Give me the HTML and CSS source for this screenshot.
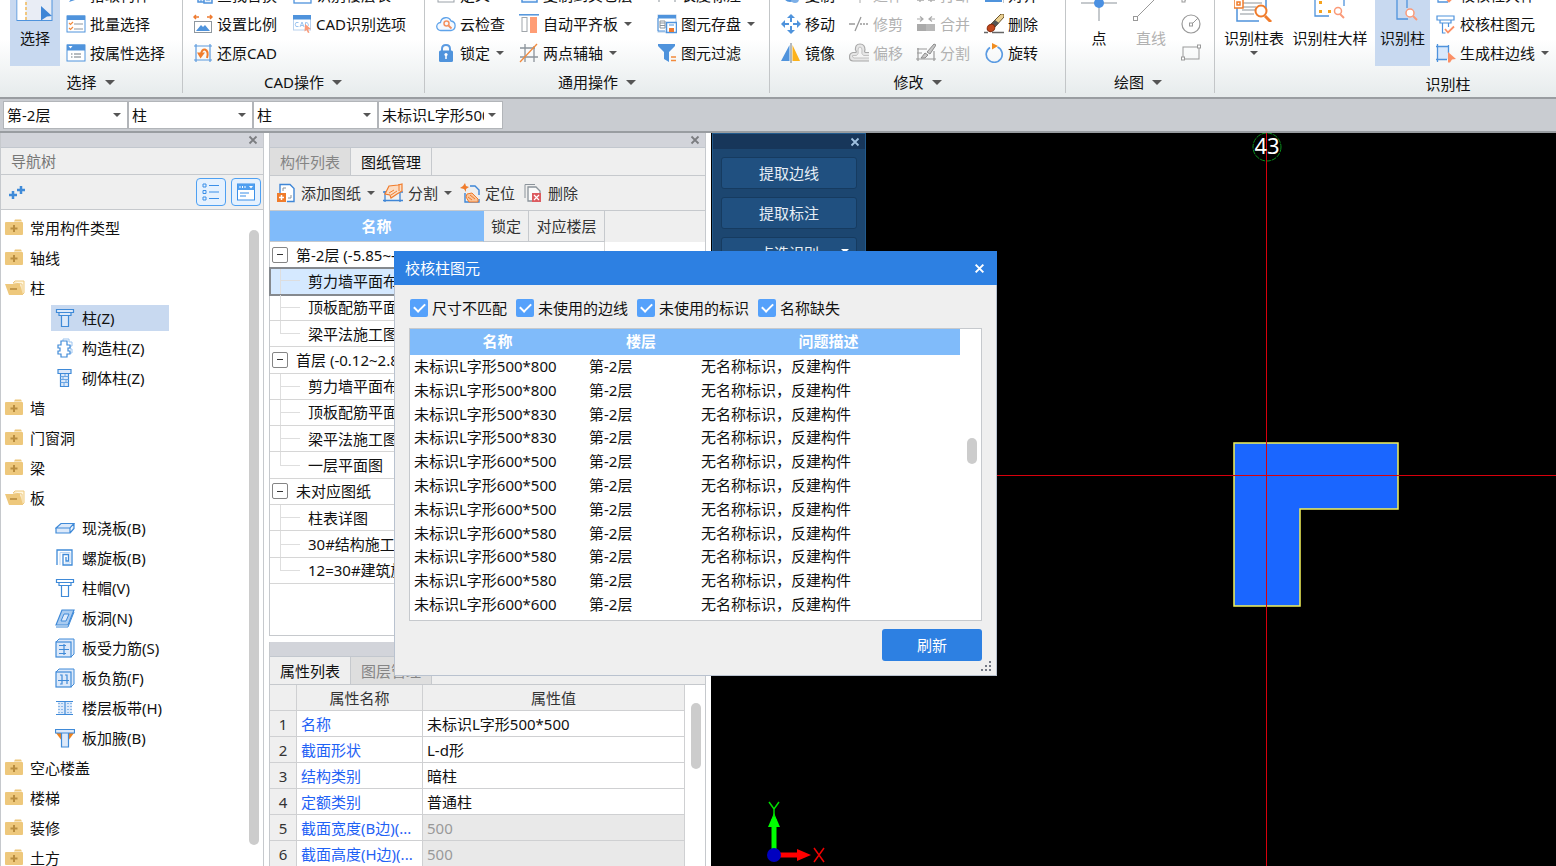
FILE: index.html
```html
<!DOCTYPE html>
<html lang="zh-CN">
<head>
<meta charset="utf-8">
<title>校核柱图元</title>
<link rel="stylesheet" href="styles.css">
</head>
<body>
<svg class="sprite" aria-hidden="true">
  <defs>
    <symbol id="i-batch" viewBox="0 0 20 20"><rect x="1" y="2" width="18" height="16" fill="#fff" stroke="#4f93dc"/><rect x="1" y="1.500" width="18" height="4.500" fill="#4f93dc"/><path d="M3 9l1.500 1.500L7 8M3 14l1.500 1.500L7 13" fill="none" stroke="#f28a3c" stroke-width="1.200"/><path d="M8 10h9M8 15h9" stroke="#8d959d" stroke-width="1.200"/></symbol>
    <symbol id="i-prop" viewBox="0 0 20 20"><rect x="1" y="2" width="18" height="16" fill="#fff" stroke="#4f93dc"/><rect x="1" y="1.500" width="18" height="6" fill="#4f93dc"/><path d="M2.500 3h4l-2 2.500z" fill="#fff"/><path d="M5 11h1.500M8 11h7M5 14h1.500M8 14h7" stroke="#6f7880" stroke-width="1.200"/></symbol>
    <symbol id="i-pick" viewBox="0 0 20 20"><path d="M3 17l5-7 4 4z" fill="#4f93dc"/><path d="M10 10l6-6" stroke="#4f93dc" stroke-width="2"/></symbol>
    <symbol id="i-find" viewBox="0 0 20 20"><rect x="5" y="3" width="10" height="14" fill="#e6f0fc" stroke="#4f93dc" stroke-width="1.500"/><rect x="11" y="10" width="8" height="8" fill="#e6f0fc" stroke="#4f93dc" stroke-width="1.500"/><path d="M8 12v5M13 15h4" stroke="#4f93dc"/></symbol>
    <symbol id="i-scale" viewBox="0 0 20 20"><path d="M1 3h5M14 3h5M3 1L1 3l2 2M17 1l2 2-2 2" fill="none" stroke="#ee7b30" stroke-width="1.500"/><rect x="1.500" y="7.500" width="17" height="11" fill="#fff" stroke="#8e979f"/><path d="M3 17l5-6 2 2 2-2 5 6z" fill="#4f93dc"/></symbol>
    <symbol id="i-restore" viewBox="0 0 20 20"><path d="M3 1v18M17 1v18M1 3h18M1 17h18" stroke="#5b9ade" stroke-width="1.200"/><path d="M8 11Q9 6 12 6.500 16 8 14 15" fill="none" stroke="#f07c2c" stroke-width="2"/><path d="M4 9.500h8l-4.500 6z" fill="#f07c2c"/></symbol>
    <symbol id="i-floor" viewBox="0 0 20 20"><rect x="2" y="2" width="17" height="16" fill="#fff" stroke="#4f93dc" stroke-width="1.300"/><path d="M6 11h9M6 14h9" stroke="#4f93dc"/></symbol>
    <symbol id="i-cadopt" viewBox="0 0 20 20"><rect x="1.500" y="2" width="17" height="14" fill="#fff" stroke="#b9d2ee"/><rect x="1" y="1" width="18" height="4.500" fill="#4f93dc"/><path d="M6.500 8.500H4q-1.500 2 0 4h2.500M8 13l2-5 2 5M9 11.500h2M13.500 8.500v4.500q4-.5 2.500-3.500-.5-1-2.500-1z" fill="none" stroke="#9cc4ef"/><path d="M13 10l6 5-3 .5 1.500 3-1.500.5-1.500-3-2 1.500z" fill="#fb9a78"/></symbol>
    <symbol id="i-define" viewBox="0 0 20 20"><rect x="2" y="2" width="16" height="15" fill="#fff" stroke="#9aa1a8"/><path d="M5 12h10" stroke="#9aa1a8"/></symbol>
    <symbol id="i-cloud" viewBox="0 0 20 20"><path d="M5 16.500a4 4 0 0 1-.5-8A5.500 5.500 0 0 1 15 7a4.800 4.800 0 0 1 0 9.500z" fill="#f4f9ff" stroke="#5fa3ea" stroke-width="1.300"/><circle cx="10.500" cy="9.500" r="2.500" fill="none" stroke="#f39160" stroke-width="1.500"/><path d="M12.500 11.500l3 3" stroke="#f39160" stroke-width="1.800"/></symbol>
    <symbol id="i-lock" viewBox="0 0 20 20"><path d="M6 8V6q0-4 4-4t4 4v2" fill="none" stroke="#5b9be2" stroke-width="2"/><rect x="3" y="7.500" width="14" height="11.500" rx="1.500" fill="#4f93dc"/><circle cx="10" cy="11.500" r="1.600" fill="#fff"/><path d="M10 12v4" stroke="#fff" stroke-width="1.500"/></symbol>
    <symbol id="i-copy" viewBox="0 0 20 20"><rect x="3" y="2" width="15" height="15" fill="#eaf3fe" stroke="#4f93dc" stroke-width="1.500"/></symbol>
    <symbol id="i-align" viewBox="0 0 20 20"><path d="M0 .8h20" stroke="#4f93dc" stroke-width="1.500"/><rect x="3" y="3.500" width="5" height="14" fill="#fff" stroke="#a0a6ab"/><rect x="11" y="3" width="7" height="16" fill="#ff9d75"/></symbol>
    <symbol id="i-axis" viewBox="0 0 20 20"><path d="M6 1v18M15 3v16M1 5h15M1 14h18" stroke="#8b939a" stroke-width="1.300"/><path d="M1 19L18 1" stroke="#f28a3c" stroke-width="1.300"/></symbol>
    <symbol id="i-dim" viewBox="0 0 20 20"><path d="M2 5v12M18 5v12M2 10h16" stroke="#8b939a"/></symbol>
    <symbol id="i-store" viewBox="0 0 20 20"><rect x="1" y="1" width="18" height="17" fill="#fff" stroke="#b0c9e6"/><rect x="1" y="1" width="18" height="3.500" fill="#4f93dc"/><path d="M1 4v13h7" fill="none" stroke="#4f93dc"/><path d="M3 7h5v7H3zM3 9h5M3 11.500h5" fill="none" stroke="#8b939a"/><rect x="9.500" y="8.500" width="10" height="10" fill="#fff" stroke="#4f93dc" stroke-width="1.500"/><rect x="12" y="14" width="5" height="4" fill="#ee7b30"/><path d="M12 11h5" stroke="#4f93dc"/></symbol>
    <symbol id="i-filter" viewBox="0 0 20 20"><path d="M1 1h17v2l-6 6v10l-5-3V9L1 3z" fill="#4f93dc"/><path d="M14 14h5M14 17.500h5" stroke="#f28a3c" stroke-width="1.500"/></symbol>
    <symbol id="i-move" viewBox="0 0 20 20"><path d="M10 0l4 4h-3v4H9V4H6zM10 20l-4-4h3v-4h2v4h3zM0 10l4-4v3h4v2H4v3zM20 10l-4 4v-3h-4V9h4V6z" fill="#4f93dc"/></symbol>
    <symbol id="i-mirror" viewBox="0 0 20 20"><path d="M8.500 2v16H0z" fill="#4f93dc"/><path d="M11.500 2v16H19z" fill="#fcb21c"/><path d="M10 0v20" stroke="#6f7880"/></symbol>
    <symbol id="i-dup" viewBox="0 0 20 20"><circle cx="9" cy="10" r="6" fill="none" stroke="#4f93dc" stroke-width="2"/><circle cx="14" cy="14" r="4" fill="#7db0e8"/></symbol>
    <symbol id="i-trim" viewBox="0 0 20 20"><path d="M0 10h6M6 17L12 3" stroke="#999" stroke-width="1.300"/><path d="M11 10h9" stroke="#999" stroke-width="1.300" stroke-dasharray="2 1"/></symbol>
    <symbol id="i-offset" viewBox="0 0 20 20"><path d="M20 18H4q-3.500 0-3.500-4T4 9.500h2.500Q8 9 6.500 7 6 1 11 1t5 6q-1 2 .5 2.500H20" fill="#e6e6e6" stroke="#a8a8a8" stroke-width="1.200"/><path d="M20 15H5q-2-.5-1.500-2.500h4Q10 11 9 7q0-3 2-3t2 3q-1 4 1.500 5.500H20" fill="#f4f4f4" stroke="#c2c2c2"/></symbol>
    <symbol id="i-extend" viewBox="0 0 20 20"><path d="M4 12h14M11 2v16" stroke="#aaa"/></symbol>
    <symbol id="i-merge" viewBox="0 0 20 20"><path d="M1 5h6M4 2.500L7 5 4 7.500M19 5h-6M16 2.500L13 5l3 2.500" fill="none" stroke="#aaa" stroke-width="1.200"/><rect x="1" y="10" width="9" height="7" fill="#aaa"/><rect x="10" y="10" width="9" height="7" fill="#b8b8b8"/></symbol>
    <symbol id="i-split" viewBox="0 0 20 20"><path d="M1 6h10M2 5v13M0 16h20M18 8v10M1 10h5" fill="none" stroke="#999" stroke-width="1.200"/><path d="M5 15l4-5 3 2-3 3zM11 9l7-8 2 1-6 9z" fill="#c8c8c8" stroke="#8b8b8b"/></symbol>
    <symbol id="i-break" viewBox="0 0 20 20"><path d="M1 15h7M12 15h7M4 11v6M15 11v6" stroke="#aaa" stroke-width="1.300"/></symbol>
    <symbol id="i-flush" viewBox="0 0 20 20"><rect x="1" y="8" width="17" height="9" fill="#4f93dc"/><path d="M20 2v16" stroke="#8b939a"/></symbol>
    <symbol id="i-erase" viewBox="0 0 20 20"><path d="M17 0h3v3l-9 10-4-3z" fill="#e9cf91" stroke="#6b542b"/><path d="M11 6l4 3-4 4-4-3z" fill="#555"/><ellipse cx="7" cy="14" rx="4" ry="3.500" transform="rotate(-35 7 14)" fill="#c2481c" stroke="#822a0c"/><path d="M0 18.500h4M8 18.500h12" stroke="#666" stroke-width="1.300"/></symbol>
    <symbol id="i-rotate" viewBox="0 0 20 20"><path d="M13.500 4A8 8 0 1 1 6 4.500" fill="none" stroke="#5b9be2" stroke-width="1.700"/><path d="M8 0l6 3-6 3.500z" fill="#f18d1f"/></symbol>
    <symbol id="i-colcheck" viewBox="0 0 20 20"><path d="M1 2h17v4H1zM4 6h11v3H4zM6.500 9v10h3M12.500 9v4" fill="#fff" stroke="#4f93dc" stroke-width="1.200"/><path d="M9 15l3 3.500 6-6" fill="none" stroke="#fb9066" stroke-width="1.800"/></symbol>
    <symbol id="i-coledge" viewBox="0 0 20 20"><rect x="2" y="3" width="10" height="13" fill="#d9e8fb"/><path d="M1.500 1v18M0 3.500h13M12.500 2v8M0 16.500h11" stroke="#4f93dc" stroke-width="1.300"/><path d="M12 9l8 7-4 .5-2 3h-2z" fill="#fb9066"/></symbol>
    <symbol id="i-coldet" viewBox="0 0 20 20"><path d="M2 2v15h10" fill="none" stroke="#4f93dc" stroke-width="1.300"/><rect x="5" y="11" width="3" height="3" fill="#f6a21c"/><path d="M10 13l3 3.500 6-6" fill="none" stroke="#fb9066" stroke-width="1.800"/></symbol>
    <symbol id="i-arc" viewBox="0 0 20 20"><path d="M4 16Q4 4 18 4" fill="none" stroke="#999"/><rect x="1" y="14" width="3" height="3" fill="#fff" stroke="#999"/></symbol>
    <symbol id="i-circle" viewBox="0 0 20 20"><circle cx="10" cy="10" r="9" fill="none" stroke="#999" stroke-width="1.200"/><rect x="8.500" y="9" width="3" height="3" fill="#fff" stroke="#999"/><path d="M12 9l5-5" stroke="#999"/></symbol>
    <symbol id="i-rect" viewBox="0 0 20 20"><rect x="2" y="4" width="16" height="12" fill="none" stroke="#999"/><rect x=".5" y="14" width="3" height="3" fill="#fff" stroke="#999"/><rect x="16.500" y="2" width="3" height="3" fill="#fff" stroke="#999"/></symbol>

    <symbol id="b-select" viewBox="0 0 40 40"><rect x="2" y="4" width="35" height="34.500" fill="#e9edf5" stroke="#4f93dc"/><rect x="2.500" y="5" width="8" height="33" fill="#fff"/><path d="M11 5v33" stroke="#f3b13f" stroke-dasharray="3 2" stroke-width="1.300"/><path d="M26 24l11 10-5 .5-6 4z" fill="#3f86d6"/></symbol>
    <symbol id="b-point" viewBox="0 0 40 40"><path d="M2 21h36M20 3v36" stroke="#8b939a"/><circle cx="20" cy="21" r="5" fill="#4a90e2"/></symbol>
    <symbol id="b-line" viewBox="0 0 40 40"><path d="M6 35L36 5" stroke="#999"/><rect x="2.500" y="34.500" width="4" height="4" fill="#fff" stroke="#999"/></symbol>
    <symbol id="b-table" viewBox="0 0 40 40"><path d="M3 4h29v26M3 25v14h22" fill="none" stroke="#4f93dc" stroke-width="1.500"/><path d="M5 21h23M8 25h14M8 28h14M6 32h14" stroke="#8b939a" stroke-width="1.200"/><path d="M0 17h9v9H0zM3 20h3v3H3z" fill="#fff" stroke="#f07c2c" stroke-width="1.500"/><circle cx="27" cy="29" r="5.500" fill="#fff" stroke="#f07c2c" stroke-width="2"/><path d="M31 34l6 6" stroke="#f07c2c" stroke-width="3"/></symbol>
    <symbol id="b-detail" viewBox="0 0 40 40"><path d="M5 4h29v20M5 4v30h14" fill="none" stroke="#4f93dc" stroke-width="1.300"/><path d="M9 19h3v3H9zM9 28h3v3H9zM18 28h3v3h-3z" fill="#f6a21c"/><circle cx="28" cy="29" r="3.500" fill="#fff" stroke="#fb9a78" stroke-width="1.500"/><path d="M30 32l4 4" stroke="#fb9a78" stroke-width="2"/></symbol>
    <symbol id="b-column" viewBox="0 0 40 40"><path d="M14 4v33h11M24 4v22" fill="none" stroke="#4f93dc" stroke-width="1.300"/><circle cx="27" cy="31" r="4" fill="#fff" stroke="#fb9a78" stroke-width="1.500"/><path d="M30 34l4 4" stroke="#fb9a78" stroke-width="2"/></symbol>

    <symbol id="t-closed" viewBox="0 0 20 20"><path d="M9 3.500l1-2h6l1 2z" fill="#eec87c"/><rect x="0" y="4" width="18" height="13" rx="1" fill="#eec87c"/><path d="M9 7v7M5.500 10.500h7" stroke="#b98d3f" stroke-width="2"/></symbol>
    <symbol id="t-open" viewBox="0 0 20 20"><path d="M8 5l2-2h9v12l-2 2V6z" fill="#fff6df" stroke="#eec87c"/><path d="M0 6h15l3 11H4z" fill="#eec87c"/><path d="M5 11h7" stroke="#b5883a" stroke-width="1.500"/></symbol>
    <symbol id="t-col" viewBox="0 0 20 20"><path d="M1.500 1.500h17v3h-17zM4 4.500h12v3H4zM6.500 7.500h7v11h-7z" fill="#dce9fa" stroke="#3f8ad8" stroke-width="1.200"/></symbol>
    <symbol id="t-cap" viewBox="0 0 20 20"><path d="M1.500 1.500h17v3h-17zM4 4.500h12v3H4zM6.500 7.500h7v11h-7z" fill="#fff" stroke="#3f8ad8" stroke-width="1.200"/></symbol>
    <symbol id="t-struct" viewBox="0 0 20 20"><path d="M8 3V1h6v3h3v4h-2v3h2v4h-2" fill="none" stroke="#9cc4ef"/><path d="M6 3h6v4h3v3h-2v3h2v3h-3v3H6v-3H3v-3h2v-3H3V7h3z" fill="#fff" stroke="#3f8ad8" stroke-width="1.200"/></symbol>
    <symbol id="t-brick" viewBox="0 0 20 20"><path d="M3 1.500h13v4H3zM5.500 5.500h8v13h-8z" fill="#dce9fa" stroke="#3f8ad8" stroke-width="1.200"/><path d="M5.500 8.500h8M5.500 11.500h8M5.500 14.500h8M10 6v3M8 9v3M11 12v3M9 15v3" stroke="#6ba6e4"/></symbol>
    <symbol id="t-slab" viewBox="0 0 20 20"><path d="M1 10l5-4.500h13L15 10zM1 10v5h14v-5M15 15l4-4.500v-5" fill="#dce9fa" stroke="#3f8ad8" stroke-width="1.200"/></symbol>
    <symbol id="t-spiral" viewBox="0 0 20 20"><path d="M2 17V2h15v15H8V6.500h5.500V13H11V9" fill="none" stroke="#3f8ad8" stroke-width="1.300"/><path d="M5 17V4.500h10V15H9.500" fill="none" stroke="#b9d4f3"/></symbol>
    <symbol id="t-hole" viewBox="0 0 20 20"><path d="M1 17L7 2h12l-6 15z" fill="#a9cbf0" stroke="#3f8ad8" stroke-width="1.200"/><path d="M6 13l3-7h5l-3 7z" fill="#dce9fa" stroke="#3f8ad8"/><path d="M1 19h12l6-15" fill="none" stroke="#3f8ad8"/></symbol>
    <symbol id="t-force" viewBox="0 0 20 20"><path d="M1 4l3-3h15v15l-3 3z" fill="#dce9fa" stroke="#3f8ad8"/><rect x="1" y="4" width="15" height="15" fill="#dce9fa" stroke="#3f8ad8" stroke-width="1.200"/><path d="M4 7.500h7M4 11.500h10M4 15.500h7M9 6v11" stroke="#3f8ad8" stroke-width="1.200"/></symbol>
    <symbol id="t-neg" viewBox="0 0 20 20"><path d="M1 4l3-3h15v15l-3 3z" fill="#dce9fa" stroke="#3f8ad8"/><rect x="1" y="4" width="15" height="15" fill="#dce9fa" stroke="#3f8ad8" stroke-width="1.200"/><path d="M5 7h2v9H5M10 7h2v9M3 12.500h11" fill="none" stroke="#3f8ad8" stroke-width="1.200"/></symbol>
    <symbol id="t-strip" viewBox="0 0 20 20"><rect x="3" y="3" width="14" height="13" fill="#dce9fa"/><path d="M1 3.500h17M1 16.500h17M10 3v13" stroke="#3f8ad8" stroke-width="1.200"/><path d="M4 5v10M7 5v10M13 5v10M16 5v10" stroke="#3f8ad8" stroke-dasharray="1 2"/></symbol>
    <symbol id="t-haunch" viewBox="0 0 20 20"><path d="M1 5h6v8zM19 5h-6v8z" fill="#f0831e"/><path d="M.5 1.500h19v3.500H.5zM6.500 5h7v14h-7z" fill="#dce9fa" stroke="#3f8ad8" stroke-width="1.200"/></symbol>

    <symbol id="d-add" viewBox="0 0 20 20"><path d="M4 10V1.500h10l4 4v13h-7" fill="#fff" stroke="#3f86d6" stroke-width="1.400"/><path d="M7 8V5h3M15 12v3h-3" fill="none" stroke="#8b939a"/><rect x="1" y="10" width="9" height="9" fill="#f07c2c"/><path d="M5.500 12v5M3 14.500h5" stroke="#fff" stroke-width="1.500"/></symbol>
    <symbol id="d-split" viewBox="0 0 20 20"><path d="M2 8v11M17 8v11M0 17.500h20M0 9h20" stroke="#3f86d6" stroke-width="1.300"/><path d="M6 3l9-1 4-1v7l-5 3-6 4-1-3-5-1z" fill="#fbdcc3" stroke="#f07c2c" stroke-width="1.200"/><path d="M6 10l5-3M8 12l6-4M16 1v7" stroke="#f07c2c"/></symbol>
    <symbol id="d-locate" viewBox="0 0 20 20"><path d="M5 0l1 3 3 1-3 2v3L4 6 0 5l3-2z" fill="#f07c2c"/><path d="M10 3h5l4 4v5M5 10v9h14v-3" fill="none" stroke="#3f86d6" stroke-width="1.400"/><path d="M7 11l5-1 6 6v3H9l-3-5z" fill="#f9c49b" stroke="#f07c2c"/><path d="M8 14l4 3M10 12l5 4" stroke="#f07c2c"/></symbol>
    <symbol id="d-delete" viewBox="0 0 20 20"><path d="M2 15V1.500h10" fill="none" stroke="#8b939a"/><path d="M5 18V4h8l4 4v10z" fill="#fafafa" stroke="#8b939a" stroke-width="1.300"/><rect x="9" y="10" width="9" height="9" fill="#dc5b60"/><path d="M11 12l5 5M16 12l-5 5" stroke="#fff" stroke-width="1.200"/></symbol>
    <symbol id="x" viewBox="0 0 10 10"><path d="M1.500 1.500l7 7M8.500 1.500l-7 7" fill="none" stroke="currentColor" stroke-width="1.800"/></symbol>
    <symbol id="n-plus" viewBox="0 0 20 20"><path d="M6 9v8M2 13h8M14 4v8M10 8h8" stroke="#3f8ad8" stroke-width="2.500"/></symbol>
    <symbol id="n-list" viewBox="0 0 20 20"><path d="M2 2h3v3H2zM2 8.500h3v3H2zM2 15h3v3H2z" fill="none" stroke="#3b8fe8"/><path d="M8 3.500h10M8 10h10M8 16.500h10" stroke="#3b8fe8" stroke-width="1.200"/></symbol>
    <symbol id="n-card" viewBox="0 0 20 20"><rect x="1.500" y="2" width="17" height="16" fill="#fff" stroke="#3b8fe8"/><rect x="1.500" y="2" width="17" height="6" fill="#4f9ff0"/><path d="M4 4v2M6.500 4v2M9 4v2" stroke="#fff"/><path d="M13 4h4l-2 2.500z" fill="#fff"/><path d="M4 11h9M4 14h6" stroke="#3b8fe8"/></symbol>
  </defs>
</svg>

<header class="ribbon">
  <section class="group g-select">
    <div class="body">
      <button class="big on"><svg><use href="#b-select"/></svg>选择<span class="foot"></span></button>
      <div class="col">
        <button class="cmd"><svg><use href="#i-pick"/></svg>拾取构件</button>
        <button class="cmd"><svg><use href="#i-batch"/></svg>批量选择</button>
        <button class="cmd"><svg><use href="#i-prop"/></svg>按属性选择</button>
      </div>
    </div>
    <button class="title">选择<i class="caret wide"></i></button>
  </section>
  <section class="group g-cad">
    <div class="body">
      <div class="col">
        <button class="cmd"><svg><use href="#i-find"/></svg>查找替换</button>
        <button class="cmd"><svg><use href="#i-scale"/></svg>设置比例</button>
        <button class="cmd"><svg><use href="#i-restore"/></svg>还原CAD</button>
      </div>
      <div class="col">
        <button class="cmd"><svg><use href="#i-floor"/></svg>识别楼层表</button>
        <button class="cmd"><svg><use href="#i-cadopt"/></svg>CAD识别选项</button>
        <span class="cmd"></span>
      </div>
    </div>
    <button class="title">CAD操作<i class="caret wide"></i></button>
  </section>
  <section class="group g-common">
    <div class="body">
      <div class="col">
        <button class="cmd"><svg><use href="#i-define"/></svg>定义</button>
        <button class="cmd"><svg><use href="#i-cloud"/></svg>云检查</button>
        <button class="cmd"><svg><use href="#i-lock"/></svg>锁定<i class="caret"></i></button>
      </div>
      <div class="col">
        <button class="cmd"><svg><use href="#i-copy"/></svg>复制到其它层</button>
        <button class="cmd"><svg><use href="#i-align"/></svg>自动平齐板<i class="caret"></i></button>
        <button class="cmd"><svg><use href="#i-axis"/></svg>两点辅轴<i class="caret"></i></button>
      </div>
      <div class="col">
        <button class="cmd"><svg><use href="#i-dim"/></svg>长度标注</button>
        <button class="cmd"><svg><use href="#i-store"/></svg>图元存盘<i class="caret"></i></button>
        <button class="cmd"><svg><use href="#i-filter"/></svg>图元过滤</button>
      </div>
    </div>
    <button class="title">通用操作<i class="caret wide"></i></button>
  </section>
  <section class="group g-modify">
    <div class="body">
      <div class="col">
        <button class="cmd"><svg><use href="#i-dup"/></svg>复制</button>
        <button class="cmd"><svg><use href="#i-move"/></svg>移动</button>
        <button class="cmd"><svg><use href="#i-mirror"/></svg>镜像</button>
      </div>
      <div class="col">
        <button class="cmd" disabled><svg><use href="#i-extend"/></svg>延伸</button>
        <button class="cmd" disabled><svg><use href="#i-trim"/></svg>修剪</button>
        <button class="cmd" disabled><svg><use href="#i-offset"/></svg>偏移</button>
      </div>
      <div class="col">
        <button class="cmd" disabled><svg><use href="#i-break"/></svg>打断</button>
        <button class="cmd" disabled><svg><use href="#i-merge"/></svg>合并</button>
        <button class="cmd" disabled><svg><use href="#i-split"/></svg>分割</button>
      </div>
      <div class="col">
        <button class="cmd"><svg><use href="#i-flush"/></svg>对齐</button>
        <button class="cmd"><svg><use href="#i-erase"/></svg>删除</button>
        <button class="cmd"><svg><use href="#i-rotate"/></svg>旋转</button>
      </div>
    </div>
    <button class="title">修改<i class="caret wide"></i></button>
  </section>
  <section class="group g-draw">
    <div class="body">
      <button class="big"><svg><use href="#b-point"/></svg>点<span class="foot"></span></button>
      <button class="big" disabled><svg><use href="#b-line"/></svg>直线<span class="foot"></span></button>
      <div class="col">
        <button class="cmd" aria-label="圆弧" disabled><svg><use href="#i-arc"/></svg></button>
        <button class="cmd" aria-label="圆" disabled><svg><use href="#i-circle"/></svg></button>
        <button class="cmd" aria-label="矩形" disabled><svg><use href="#i-rect"/></svg></button>
      </div>
    </div>
    <button class="title">绘图<i class="caret wide"></i></button>
  </section>
  <section class="group g-recog">
    <div class="body">
      <button class="big"><svg><use href="#b-table"/></svg>识别柱表<span class="foot"><i class="caret"></i></span></button>
      <button class="big"><svg><use href="#b-detail"/></svg>识别柱大样<span class="foot"></span></button>
      <button class="big on"><svg><use href="#b-column"/></svg>识别柱<span class="foot"></span></button>
      <div class="col">
        <button class="cmd"><svg><use href="#i-coldet"/></svg>校核柱大样</button>
        <button class="cmd"><svg><use href="#i-colcheck"/></svg>校核柱图元</button>
        <button class="cmd"><svg><use href="#i-coledge"/></svg>生成柱边线<i class="caret"></i></button>
      </div>
    </div>
    <div class="title">识别柱</div>
  </section>
</header>

<nav class="selectors" aria-label="当前构件">
  <label class="pick"><select aria-label="楼层"><option>第-2层</option></select><i class="caret"></i></label>
  <label class="pick"><select aria-label="构件类别"><option>柱</option></select><i class="caret"></i></label>
  <label class="pick"><select aria-label="构件类型"><option>柱</option></select><i class="caret"></i></label>
  <label class="pick"><select aria-label="构件"><option>未标识L字形500*500</option></select><i class="caret"></i></label>
</nav>

<main class="work">
  <aside class="panel nav">
    <div class="strip"><button class="close" aria-label="关闭"><svg><use href="#x"/></svg></button></div>
    <h2 class="nav-title">导航树</h2>
    <div class="nav-tools">
      <button class="plain" aria-label="展开"><svg><use href="#n-plus"/></svg></button>
      <button class="toggle" aria-label="列表视图"><svg><use href="#n-list"/></svg></button>
      <button class="toggle" aria-label="卡片视图"><svg><use href="#n-card"/></svg></button>
    </div>
    <div class="tree-wrap">
      <ul class="tree">
        <li><button><svg><use href="#t-closed"/></svg>常用构件类型</button></li>
        <li><button><svg><use href="#t-closed"/></svg>轴线</button></li>
        <li><button><svg><use href="#t-open"/></svg>柱</button>
          <ul>
            <li><button class="current"><svg><use href="#t-col"/></svg>柱(Z)</button></li>
            <li><button><svg><use href="#t-struct"/></svg>构造柱(Z)</button></li>
            <li><button><svg><use href="#t-brick"/></svg>砌体柱(Z)</button></li>
          </ul>
        </li>
        <li><button><svg><use href="#t-closed"/></svg>墙</button></li>
        <li><button><svg><use href="#t-closed"/></svg>门窗洞</button></li>
        <li><button><svg><use href="#t-closed"/></svg>梁</button></li>
        <li><button><svg><use href="#t-open"/></svg>板</button>
          <ul>
            <li><button><svg><use href="#t-slab"/></svg>现浇板(B)</button></li>
            <li><button><svg><use href="#t-spiral"/></svg>螺旋板(B)</button></li>
            <li><button><svg><use href="#t-cap"/></svg>柱帽(V)</button></li>
            <li><button><svg><use href="#t-hole"/></svg>板洞(N)</button></li>
            <li><button><svg><use href="#t-force"/></svg>板受力筋(S)</button></li>
            <li><button><svg><use href="#t-neg"/></svg>板负筋(F)</button></li>
            <li><button><svg><use href="#t-strip"/></svg>楼层板带(H)</button></li>
            <li><button><svg><use href="#t-haunch"/></svg>板加腋(B)</button></li>
          </ul>
        </li>
        <li><button><svg><use href="#t-closed"/></svg>空心楼盖</button></li>
        <li><button><svg><use href="#t-closed"/></svg>楼梯</button></li>
        <li><button><svg><use href="#t-closed"/></svg>装修</button></li>
        <li><button><svg><use href="#t-closed"/></svg>土方</button></li>
      </ul>
      <div class="track"><span class="thumb"></span></div>
    </div>
  </aside>

  <div class="middle">
    <section class="panel drawings">
      <div class="strip"><button class="close" aria-label="关闭"><svg><use href="#x"/></svg></button></div>
      <div class="tabs"><button>构件列表</button><button class="active">图纸管理</button></div>
      <div class="tools">
        <button><svg><use href="#d-add"/></svg>添加图纸<i class="caret"></i></button>
        <button><svg><use href="#d-split"/></svg>分割<i class="caret"></i></button>
        <button><svg><use href="#d-locate"/></svg>定位</button>
        <button><svg><use href="#d-delete"/></svg>删除</button>
      </div>
      <div class="sheet-head"><span class="main">名称</span><span>锁定</span><span>对应楼层</span></div>
      <ul class="sheets">
        <li class="floor"><span class="box"></span>第-2层 (-5.85~-0.22)</li>
        <li class="leaf selected">剪力墙平面布置图</li>
        <li class="leaf">顶板配筋平面图</li>
        <li class="leaf last">梁平法施工图</li>
        <li class="floor"><span class="box"></span>首层 (-0.12~2.88)</li>
        <li class="leaf">剪力墙平面布置图</li>
        <li class="leaf">顶板配筋平面图</li>
        <li class="leaf">梁平法施工图</li>
        <li class="leaf last">一层平面图</li>
        <li class="floor"><span class="box"></span>未对应图纸</li>
        <li class="leaf">柱表详图</li>
        <li class="leaf">30#结构施工图</li>
        <li class="leaf last">12=30#建筑施工图</li>
      </ul>
    </section>

    <section class="panel props">
      <div class="strip"></div>
      <div class="tabs"><button class="active">属性列表</button><button>图层管理</button></div>
      <div class="props-wrap">
        <table class="proptable">
          <thead><tr><th class="num"></th><th class="name">属性名称</th><th>属性值</th></tr></thead>
          <tbody>
            <tr><td class="num">1</td><td class="key">名称</td><td>未标识L字形500*500</td></tr>
            <tr><td class="num">2</td><td class="key">截面形状</td><td>L-d形</td></tr>
            <tr><td class="num">3</td><td class="key">结构类别</td><td>暗柱</td></tr>
            <tr><td class="num">4</td><td class="key">定额类别</td><td>普通柱</td></tr>
            <tr><td class="num">5</td><td class="key">截面宽度(B边)(...</td><td class="ro">500</td></tr>
            <tr><td class="num">6</td><td class="key">截面高度(H边)(...</td><td class="ro">500</td></tr>
          </tbody>
        </table>
        <div class="track"><span class="thumb"></span></div>
      </div>
    </section>
  </div>

  <section class="canvas">
    <svg class="scene" role="img" aria-label="L形柱平面">
      <circle cx="556" cy="14" r="14" fill="none" stroke="#0a8f1c" stroke-dasharray="5 1"/>
      <path d="M523 310h164v66h-98v97h-66z" fill="#1a66ff" stroke="#f4f25a" stroke-width="1.500"/>
      <rect x="0" y="342" width="100%" height="1" fill="#d8000c"/>
      <rect x="555" y="0" width="1" height="100%" fill="#d8000c"/>
      <text class="axis-no" x="556" y="21" text-anchor="middle">43</text>
    </svg>
    <svg class="ucs" viewBox="0 0 60 70" aria-hidden="true">
      <path d="M13 57V26" stroke="#0f0" stroke-width="5"/><path d="M13 20l6 14H7z" fill="#0f0"/>
      <path d="M13 62h26" stroke="red" stroke-width="5"/><path d="M50 62l-14 6V56z" fill="red"/>
      <circle cx="13" cy="62" r="7" fill="#0000c0"/>
      <path d="M8 9l5 7 5-7M13 16v8" fill="none" stroke="#0d0" stroke-width="1.500"/>
      <path d="M53 55l10 14M63 55l-10 14" stroke="#e00" stroke-width="1.500"/>
    </svg>
    <div class="steps">
      <div class="steps-bar"><button class="close" aria-label="关闭"><svg><use href="#x"/></svg></button></div>
      <button>提取边线</button>
      <button>提取标注</button>
      <button>点选识别<i class="caret"></i></button>
    </div>
  </section>
</main>

<div class="dialog" role="dialog" aria-labelledby="dlg">
  <header><h1 id="dlg">校核柱图元</h1><button class="close" aria-label="关闭"><svg><use href="#x"/></svg></button></header>
  <div class="checks">
    <label><input type="checkbox" checked>尺寸不匹配</label>
    <label><input type="checkbox" checked>未使用的边线</label>
    <label><input type="checkbox" checked>未使用的标识</label>
    <label><input type="checkbox" checked>名称缺失</label>
  </div>
  <div class="results">
    <table>
      <thead><tr><th class="c1">名称</th><th class="c2">楼层</th><th>问题描述</th></tr></thead>
      <tbody>
        <tr><td>未标识L字形500*800</td><td>第-2层</td><td>无名称标识，反建构件</td></tr>
        <tr><td>未标识L字形500*800</td><td>第-2层</td><td>无名称标识，反建构件</td></tr>
        <tr><td>未标识L字形500*830</td><td>第-2层</td><td>无名称标识，反建构件</td></tr>
        <tr><td>未标识L字形500*830</td><td>第-2层</td><td>无名称标识，反建构件</td></tr>
        <tr><td>未标识L字形600*500</td><td>第-2层</td><td>无名称标识，反建构件</td></tr>
        <tr><td>未标识L字形600*500</td><td>第-2层</td><td>无名称标识，反建构件</td></tr>
        <tr><td>未标识L字形600*500</td><td>第-2层</td><td>无名称标识，反建构件</td></tr>
        <tr><td>未标识L字形600*580</td><td>第-2层</td><td>无名称标识，反建构件</td></tr>
        <tr><td>未标识L字形600*580</td><td>第-2层</td><td>无名称标识，反建构件</td></tr>
        <tr><td>未标识L字形600*580</td><td>第-2层</td><td>无名称标识，反建构件</td></tr>
        <tr><td>未标识L字形600*600</td><td>第-2层</td><td>无名称标识，反建构件</td></tr>
      </tbody>
    </table>
    <div class="track"><span class="thumb"></span></div>
  </div>
  <footer><button class="refresh">刷新</button></footer>
  <svg class="grip" viewBox="0 0 11 11" aria-hidden="true"><path d="M8 0h2v2H8zM4 4h2v2H4zM8 4h2v2H8zM0 8h2v2H0zM4 8h2v2H4zM8 8h2v2H8z" fill="#737985"/></svg>
</div>
</body>
</html>
```

FILE: styles.css
```css
* { box-sizing: border-box; }
html, body { height: 100%; }
body {
  margin: 0;
  display: flex;
  flex-direction: column;
  position: relative;
  overflow: hidden;
  background: #fff;
  color: #111;
  font: 15px/20px "Noto Sans", "Noto Sans CJK SC", sans-serif;
}
button, select, input { font: inherit; color: inherit; }
button { margin: 0; padding: 0; border: 0; background: none; white-space: nowrap; }
ul { list-style: none; margin: 0; padding: 0; }
h1, h2 { margin: 0; font-size: 15px; font-weight: 400; }
svg { flex: none; }
.sprite { position: absolute; width: 0; height: 0; }

.caret {
  flex: none;
  border: 4px solid transparent;
  border-top-color: #555;
  border-bottom: 0;
}
.caret.wide { border-width: 5px; border-bottom: 0; }

/* Ribbon */
.ribbon {
  flex: none;
  display: flex;
  height: 99px;
  overflow: hidden;
  background: linear-gradient(#fff 40%, #e6ebec);
  border-bottom: 2px solid #999da1;
}
.group {
  flex: none;
  display: flex;
  flex-direction: column;
  justify-content: flex-end;
  margin-bottom: 4px;
  border-right: 1px solid #c3c6c8;
}
.g-select { width: 183px; padding-left: 10px; }
.g-cad { width: 242px; padding-left: 10px; }
.g-common { width: 345px; padding-left: 11px; }
.g-modify { width: 296px; padding-left: 11px; }
.g-draw { width: 149px; padding-left: 7px; }
.g-recog { width: 466px; padding-left: 1px; }
.body { flex: none; display: grid; height: 87px; }
.g-select .body { grid-template-columns: 56px auto; }
.g-cad .body { grid-template-columns: 99px auto; }
.g-common .body { grid-template-columns: 83px 138px auto; }
.g-modify .body { grid-template-columns: 68px 67px 68px auto; }
.g-draw .body { grid-template-columns: 52px 56px auto; }
.g-recog .body { grid-template-columns: 76px 83px 61px auto; }
.cmd { display: flex; align-items: center; gap: 4px; height: 29px; }
.cmd svg { width: 20px; height: 20px; }
.cmd .caret { margin-left: 2px; }
button:disabled { color: #b1b1b1; }
.big {
  display: flex;
  flex-direction: column;
  justify-content: flex-end;
  align-items: center;
  height: 86px;
  justify-self: start;
  width: 76px;
}
.big svg { width: 40px; height: 40px; margin-bottom: 6px; }
.g-select .big { width: 50px; }
.g-draw .big { width: 52px; }
.g-recog .big.on { width: 55px; }
.big.on { background: #c8d9f0; }
.foot { display: flex; justify-content: center; height: 18px; padding-top: 3px; }
.title {
  flex: none;
  display: flex;
  justify-content: center;
  align-items: center;
  gap: 8px;
  height: 26px;
  padding-top: 4px;
}
button.title { padding-right: 11px; }
div.title { padding-top: 7px; }

/* Selector bar */
.selectors {
  flex: none;
  display: flex;
  gap: 2px;
  height: 34px;
  padding: 3px 4px 4px;
  background: #c9ccd1;
  border-bottom: 2px solid #999da1;
}
.pick { display: flex; align-items: center; width: 123px; height: 26px; background: #fff; box-shadow: 0 0 0 1px #b2b5b9; padding-right: 6px; }
.pick select { flex: 1; min-width: 0; height: 26px; padding: 0 4px 0 3px; border: 0; background: none; appearance: none; overflow: hidden; }

/* Work area */
.work { flex: 1; min-height: 0; display: grid; grid-template-columns: 264px 437px 1fr; column-gap: 5px; }
.panel { display: flex; flex-direction: column; min-height: 0; border: 1px solid #c6c9cd; border-top: 0; background: #fff; }
.strip { flex: none; display: flex; justify-content: flex-end; align-items: center; height: 15px; padding-right: 5px; background: #d2d4da; border-bottom: 1px solid #c2c7ce; }
.close { display: flex; color: #7b7d80; }
.close svg { width: 10px; height: 10px; }
.nav { border-bottom: 0; }
.nav-title { height: 27px; padding: 3px 10px; background: #efefef; border-bottom: 1px solid #c6c9cd; color: #777; }
.nav-tools { flex: none; display: flex; align-items: center; gap: 5px; height: 35px; padding: 0 2px 0 6px; background: #efefef; border-bottom: 1px solid #c6c9cd; }
.nav-tools svg { width: 20px; height: 20px; }
.plain { display: flex; margin-right: auto; }
.toggle { display: grid; place-items: center; width: 30px; height: 28px; border: 1px solid #4ea0f2; border-radius: 4px; background: #e5f1fe; }
.tree-wrap { flex: 1; min-height: 0; display: flex; justify-content: space-between; overflow: hidden; }
.tree { padding: 3px 0 0 4px; }
.tree button { display: flex; align-items: center; gap: 5px; height: 30px; }
.tree svg { width: 20px; height: 20px; }
.tree ul { padding-left: 46px; }
.tree ul li { display: flex; align-items: center; height: 30px; }
.tree ul button { gap: 7px; height: 26px; padding-left: 4px; width: 118px; }
.tree .current { background: #c8d9f0; }
.thumb { display: block; width: 10px; border-radius: 5px; background: #ccc; }
.nav .track { padding: 20px 4px 21px 0; }
.nav .thumb { height: 100%; }

.middle { display: grid; grid-template-rows: minmax(0, 1fr) 224px; row-gap: 6px; min-height: 0; }
.tabs { flex: none; display: flex; height: 28px; background: #efefef; border-bottom: 1px solid #c6c9cd; }
.tabs button { width: 81px; background: #dedede; color: #858585; border-right: 1px solid #c6c9cd; }
.tabs .active { background: #efefef; color: #111; }
.tools { flex: none; display: flex; align-items: center; gap: 8px; height: 35px; padding-left: 6px; background: #efefef; border-bottom: 1px solid #c6c9cd; color: #333; }
.tools button { display: flex; align-items: center; gap: 5px; }
.tools svg { width: 20px; height: 20px; }
.tools .caret { margin-left: 1px; }
.sheet-head { flex: none; display: grid; grid-template-columns: 214px 45px 76px; height: 31px; background: #efefef; color: #333; }
.sheet-head span { display: grid; place-items: center; border-right: 1px solid #c6c9cd; border-bottom: 1px solid #c6c9cd; }
.sheet-head .main { background: #80bbfa; color: #fff; font-weight: 700; border-right-color: #80bbfa; }
.sheets { flex: none; display: grid; grid-auto-rows: 1fr; height: 342px; width: 335px; border-right: 1px solid #d6d6d6; }
.sheets li { display: flex; align-items: center; border-bottom: 1px solid #d6d6d6; white-space: nowrap; }
.floor { gap: 8px; padding-left: 2px; }
.box { display: grid; place-items: center; width: 16px; height: 16px; border: 1px solid #858585; border-radius: 2px; }
.box::after { content: ""; width: 6px; height: 1px; background: #333; }
.leaf { padding-left: 38px; background: linear-gradient(#dedede, #dedede) 10px 0 / 1px 100% no-repeat, linear-gradient(#dedede, #dedede) 10px 50% / 20px 1px no-repeat; }
.leaf.last { background-size: 1px 50%, 20px 1px; }
.leaf.selected { background-color: #d5e9ff; outline: 2px solid #85898e; outline-offset: -1px; }

.props { border-bottom: 0; overflow: hidden; }
.props-wrap { display: grid; grid-template-columns: 1fr 20px; align-items: start; }
.proptable { border-collapse: separate; border-spacing: 0; table-layout: fixed; width: 100%; }
.proptable th, .proptable td { height: 26px; padding: 0 4px; border-right: 1px solid #cfd0d2; border-bottom: 1px solid #cfd0d2; white-space: nowrap; overflow: hidden; }
.proptable th { background: #efefef; font-weight: 400; color: #333; }
.proptable .num { width: 27px; background: #efefef; text-align: center; color: #333; }
.proptable .name { width: 126px; }
.proptable .key { color: #1f62f5; }
.proptable .ro { background: #e9e9e9; color: #999; }
.props .track { padding: 18px 0 0 6px; }
.props .thumb { height: 66px; }

.canvas { position: relative; overflow: hidden; background: #000; }
.scene { display: block; width: 100%; height: 100%; }
.axis-no { fill: #fff; font-size: 22px; }
.ucs { position: absolute; left: 50px; bottom: 3px; width: 60px; height: 70px; overflow: visible; }
.steps {
  position: absolute;
  top: 0;
  left: 1px;
  width: 154px;
  height: 200px;
  padding: 0 8px;
  display: flex;
  flex-direction: column;
  gap: 8px;
  background: #1c4670;
  border: 1px solid #225a8c;
  color: #e6eef6;
}
.steps-bar { display: flex; justify-content: flex-end; align-items: center; height: 15px; margin: 0 -8px; padding-right: 5px; background: #17365a; }
.steps .close { color: #9fc0df; }
.steps > button { display: flex; justify-content: center; align-items: center; position: relative; flex: none; height: 32px; border: 1px solid #163b60; border-radius: 3px; background: #205080; }
.steps .caret { position: absolute; right: 7px; top: 11px; border-top-color: #fff; }

/* Dialog */
.dialog {
  position: absolute;
  left: 394px;
  top: 251px;
  width: 603px;
  background: #efefef;
  border: 1px solid #b9c2cf;
  border-top: 0;
}
.dialog header { display: flex; justify-content: space-between; align-items: center; height: 34px; margin: 0 -1px; padding: 0 12px 0 11px; background: #2d80e2; color: #fff; }
.dialog .close { color: #fff; }
.dialog .close svg { width: 11px; height: 11px; }
.checks { display: flex; gap: 9px; padding: 13px 15px 10px; }
.checks label { display: flex; align-items: center; gap: 4px; }
.checks input {
  appearance: none;
  width: 18px;
  height: 18px;
  margin: 0;
  border-radius: 2px;
  display: grid;
  place-items: center;
  background: #55a1fb;
}
.checks input::after { content: ""; width: 5px; height: 9px; margin-bottom: 3px; border: solid #fff; border-width: 0 2px 2px 0; transform: rotate(45deg); }
.results { display: grid; grid-template-columns: 1fr 21px; height: 293px; margin: 0 14px; background: #fff; border: 1px solid #c6c9cd; }
.results table { width: 100%; height: 288px; table-layout: fixed; border-collapse: collapse; }
.results th { height: 26px; padding: 0 0 2px; background: #80bbfa; color: #fff; font-weight: 700; }
.results td { padding: 0 4px 2px; line-height: 16px; white-space: nowrap; }
.results .c1 { width: 175px; }
.results .c2 { width: 112px; }
.results .track { padding: 109px 0 0 7px; }
.results .thumb { height: 26px; }
.dialog footer { display: flex; justify-content: flex-end; padding: 8px 14px 14px; }
.refresh { width: 100px; height: 32px; border-radius: 3px; background: #2d80e2; color: #fff; }
.grip { position: absolute; right: 4px; bottom: 3px; width: 11px; height: 11px; }
```
